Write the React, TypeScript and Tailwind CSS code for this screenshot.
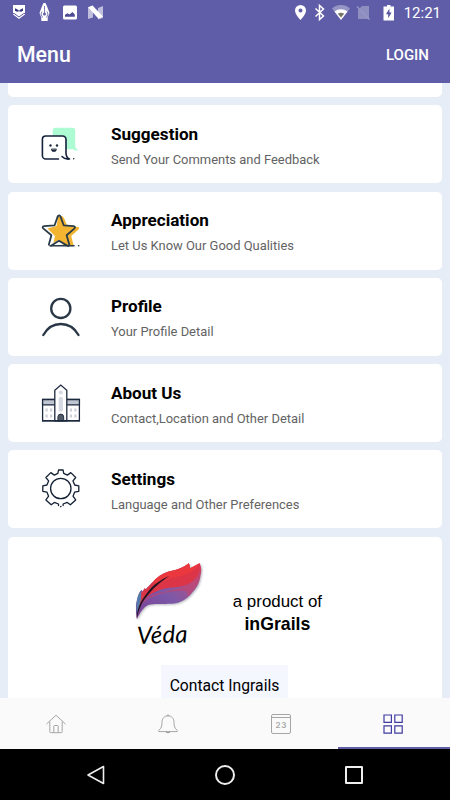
import type { ReactNode } from 'react';

type MenuItem = {
  title: string;
  detail: string;
  icon: ReactNode;
};

const INK = '#1e293b';

function SuggestionIcon() {
  return (
    <svg viewBox="0 0 40 40" className="size-10" fill="none" strokeLinecap="round" strokeLinejoin="round">
      <path d="M14 3.700h17.500a2.700 2.700 0 0 1 2.700 2.700V21c0 3 1.400 4.600 3.700 5.400-2 .4-4.300.1-6-1.200H11.700V6.200a2.500 2.500 0 0 1 2.300-2.500z" fill="#acfbd3" />
      <rect x="1.400" y="12" width="23.600" height="23" rx="3.300" fill="#fff" />
      <path d="M17.500 35H4.700a3.300 3.300 0 0 1-3.300-3.300V15.300A3.300 3.300 0 0 1 4.700 12h17a3.300 3.300 0 0 1 3.300 3.300V29c0 3.200 1.200 5 3.500 6-3 .4-5.800-.6-7.500-2.500" stroke="#16213b" strokeWidth="1.600" />
      <circle cx="9.500" cy="21.500" r="1.200" fill={INK} />
      <circle cx="16" cy="21.500" r="1.200" fill={INK} />
      <path d="M10.400 25.400a2.500 2.200 0 0 0 5 0z" fill={INK} stroke={INK} strokeWidth=".8" />
      <circle cx="32.700" cy="34.800" r=".8" fill={INK} />
    </svg>
  );
}

function StarIcon() {
  return (
    <svg viewBox="0 0 40 40" className="size-10" fill="none" strokeLinecap="round" strokeLinejoin="round">
      <path d="M17 7c1-2.500 4.500-3 6 0l3.300 8.100 10.400.8c1.700.2 2 1.600.8 2.700l-7.300 6.400 2.500 9.800H15l-3-1 2-8.800-7.500-7.500 9-2.500z" fill="#f3b431" />
      <path d="M9 34l8.500-5 6.500 4-6 1.500z" fill="#fff" />
      <path d="M16.700 5.600c.6-1.700 2.200-1.700 2.800 0l3.200 8.700 9.800.8c1.600.1 2 1.500.8 2.500l-7.700 6.700 2.600 9c.4 1.500-.8 2.200-2 1.300L18 29.800l-8 4.900" stroke="#2a3b48" strokeWidth="1.800" />
      <path d="M16.700 5.600l-3.100 8.700-10.600.8c-1.400.1-1.800 1.400-.8 2.300l8.200 6.900-2.600 9.400" stroke="#2a3b48" strokeWidth="1.800" />
      <path d="M9 34.800h24" stroke="#2a3b48" strokeWidth="1.600" />
      <circle cx="37.700" cy="34.800" r=".8" fill={INK} />
    </svg>
  );
}

function ProfileIcon() {
  return (
    <svg viewBox="0 0 40 40" className="size-10" fill="none" stroke="#293746" strokeWidth="2.300" strokeLinecap="round">
      <circle cx="19.800" cy="11.400" r="9.600" />
      <path d="M2.300 38C6.300 31 12.600 27 19.800 27s13.700 4 17.700 11" />
    </svg>
  );
}

function BuildingIcon() {
  return (
    <svg viewBox="0 0 40 40" className="size-10" fill="none" stroke="#1d293e" strokeWidth="1.300">
      <rect x="1.600" y="16.500" width="36.800" height="21.300" fill="#fff" />
      <path d="M1.600 16.500h36.800v5.300H1.600z" fill="#bfc6d1" />
      <path d="M13.800 37.800V7.200L19.800 2l6 5.200v30.600z" fill="#fff" />
      <circle cx="19.800" cy="9.500" r="2" fill="#d5d9e1" stroke="none" />
      <rect x="17.700" y="14" width="4.200" height="14.500" rx="1.500" fill="#d5d9e1" stroke="none" />
      <path d="M16.900 37.800V34a2.900 2.900 0 0 1 5.800 0v3.800z" fill="#535b66" strokeWidth=".9" />
      <path d="M5.600 25.500v3m4.500-3v3m19.800-3v3m4.500-3v3M5.600 31.500v3m4.500-3v3m19.800-3v3m4.500-3v3" stroke="#ccd1da" strokeWidth="2.200" />
      <path d="M1 37.800h38" strokeWidth="1.500" />
    </svg>
  );
}

function GearIcon() {
  return (
    <svg viewBox="0 0 40 40" className="size-10" fill="none" stroke="#142033" strokeWidth="1.300" strokeLinecap="round" strokeLinejoin="round">
      <circle cx="19.800" cy="19.500" r="10.200" />
      <path d="M17.500 36.500v-1.500l-4.100-1.600-3.200 2.400-5.300-4.900 2.700-3.700-1.700-4.100-4.100-.8v-5.500l4.100-.8 1.700-4.100-2.700-3.400 4.900-4.900 3.500 2.500 3.600-1.700.6-3.400h4.600l.6 3.400 3.600 1.700 3.500-2.500 4.900 4.900-2.700 3.400 1.700 4.100 4.100.8v5.500l-4.100.8-1.700 4.100 2.700 3.700-5.300 4.900-3.200-2.400-4.100 1.600v1.500" />
      <circle cx="19.800" cy="37.600" r=".8" fill="#142033" stroke="none" />
    </svg>
  );
}

const items: MenuItem[] = [
  { title: 'Suggestion', detail: 'Send Your Comments and Feedback', icon: <SuggestionIcon /> },
  { title: 'Appreciation', detail: 'Let Us Know Our Good Qualities', icon: <StarIcon /> },
  { title: 'Profile', detail: 'Your Profile Detail', icon: <ProfileIcon /> },
  { title: 'About Us', detail: 'Contact,Location and Other Detail', icon: <BuildingIcon /> },
  { title: 'Settings', detail: 'Language and Other Preferences', icon: <GearIcon /> },
];

function StatusBar() {
  return (
    <div className="flex h-[27px] items-center justify-between pb-px pl-[13px] pr-[9px] text-white">
      <svg viewBox="0 0 92 20" className="h-5 w-[92px]" fill="currentColor">
        <path d="M0 2h12v9.500L6 16l-6-4.500z" />
        <path d="M2 5.200l3 1.600L6 8l1-1.200 3-1.600v2.600L8 8.700l-2-.4-2 .4-2-.9z" fill="#33337e" />
        <path d="M0 10.500h1.200L6 14l4.800-3.500H12" fill="none" stroke="#5f5da7" strokeWidth="1" />
        <path d="M30.500 0h2l1.500 3.300L36.500 10l-1.800 4.500v3.500h-6.400v-3.500L26.500 10 29 3.300z" />
        <path d="M31.500 3v7M29 8.500l-1 2.500 1.500 3.500M34 8.500l1 2.500-1.500 3.500" fill="none" stroke="#5f5da7" strokeWidth=".8" />
        <circle cx="31.500" cy="11" r="1.500" fill="#5f5da7" />
        <rect x="50" y="2.500" width="14" height="14" rx="1.500" />
        <path d="M52 13.700v-2l2.500-1.500 2 1.300 3-2.500 2.300 2.500v2.200z" fill="#4b4a94" />
        <path d="M75 4.500l5-2v12l-5 1.500zM85 5l5-2v12l-5 1.500z" opacity=".6" />
        <path d="M75 4.200l4.500-1.700L90 13.500l-4.500 2.200z" />
      </svg>
      <div className="flex items-center gap-[10px]">
        <svg viewBox="0 0 100 20" className="h-5 w-[100px]" fill="currentColor">
          <path fillRule="evenodd" d="M6.500 2A5.500 5.500 0 0 0 1 7.500C1 11.500 6.500 17 6.500 17S12 11.500 12 7.500A5.500 5.500 0 0 0 6.500 2zm0 3.600a2 2 0 1 1 0 4 2 2 0 0 1 0-4z" />
          <path d="M21.500 5.500l8 7.500-4 3.500v-14l4 3.500-8 7.500" fill="none" stroke="currentColor" strokeWidth="1.500" />
          <path d="M38 5.500a13.500 13.500 0 0 1 18 0L47 17z" opacity=".35" />
          <path d="M40.500 8.600a10 10 0 0 1 13 0L47 17z" />
          <path d="M43.800 10.700a6 6 0 0 1 6.400 0L47 14.500z" fill="#77746a" />
          <path d="M68 3h7v13H64V7z" opacity=".3" />
          <path d="M63 3.500l12.500 13" stroke="#9896c8" strokeWidth="1.400" />
          <path d="M93 2h3.500v1.500H100v14H89.500v-14H93z" />
          <path d="M95.400 5.500L92 11.200h2.200v4l3.400-5.700h-2.200z" fill="#5552a0" />
        </svg>
        <span className="text-[15px] leading-5">12:21</span>
      </div>
    </div>
  );
}

function VedaLogo() {
  return (
    <div className="flex w-[66px] flex-col">
      <svg viewBox="0 0 66 58" className="h-[58px] w-[66px] drop-shadow-[1px_1px_1px_#b8b8c0]">
        <defs>
          <linearGradient id="vane" x1="0" y1="1" x2="1" y2="0">
            <stop offset="0" stopColor="#7a3f92" />
            <stop offset=".45" stopColor="#7c58a8" />
            <stop offset=".75" stopColor="#a5538d" />
            <stop offset="1" stopColor="#df3854" />
          </linearGradient>
        </defs>
        <path d="M1 57C-.5 50-.5 45 .3 41.300 1 36 3 31 5.300 28l1.500 1.500 1.800-3.200 1.200 1L17 19.700C21 15 26 12 32 9.700c5-1.400 12-1.500 20.900-8.400l1.300 5 9.400-5c2 4 2 8 1 11.700-1 7-3 12-7.600 16.700-4 5-8 8.500-15 11-6 1.600-9 .8-13.400 1.300-6 0-11-.5-16.600 1C8 45 4 50 1 57z" fill="url(#vane)" />
        <path d="M5 43C12 32 22 31 32 29c14-2 24-7 31-17-1 10-5 17-12 23 2-6-2-7-9-6-14 1-27 4-37 14z" fill="#c4446f" opacity=".65" />
        <path d="M2.500 45l1.500-14 2.800-1.500 1.800-3.200 1.200 1L17 19.700C21 15 26 12 32 9.700c5-1.400 12-1.500 20.900-8.400l1.300 5 9.400-5c1.400 6-1 12-5 16-5 6-13 8-26 8.500C19 28 10 34 2.500 45z" fill="#dc3547" />
        <path d="M17 19.700C21 15 26 12 32 9.700c5-1.400 12-1.500 20.900-8.400l1.300 5 9.400-5C58 11 48 14 34 16l-14 6z" fill="#ef3a3c" opacity=".8" />
        <path d="M1 53C-.5 42 1 33 5.300 28L5 37z" fill="#557bac" />
        <path d="M.8 57c-.3-9 3.200-17 10.200-26 6-8.500 14-13.500 22.600-17.300C26 19 19 24 12.800 32 5.500 40 2.500 48 .8 57z" fill="#211321" />
      </svg>
      <span className="ml-px mt-[3px] block origin-left -rotate-2 font-['Lato',sans-serif] text-[24px] italic leading-6 tracking-[.2px] text-black">Véda</span>
    </div>
  );
}

function BottomTabs() {
  return (
    <nav className="grid h-[51px] shrink-0 grid-cols-4 bg-[#fafafa] text-[#a6a6a6]">
      <div className="flex items-center justify-center">
        <svg viewBox="0 0 20 20" className="size-5" fill="none" stroke="currentColor" strokeLinecap="round" strokeLinejoin="round">
          <path d="M.8 9.800L10 1.200l9.200 8.600M3.800 8v9.500c0 .8.500 1.200 1.200 1.200h10c.7 0 1.200-.4 1.200-1.200V8M7.800 18.500v-6.200c0-.6.300-.8.800-.8h2.800c.5 0 .8.200.8.800v6.200" />
        </svg>
      </div>
      <div className="flex items-center justify-center pr-px">
        <svg viewBox="0 0 20 20" className="size-5" fill="none" stroke="currentColor" strokeLinejoin="round">
          <path d="M8.500 1.800a1.600 1.200 0 0 1 3 0M10 2c-4 0-6 2.700-6 6.200 0 4-.8 6.100-3.200 8.200v1.200h18.400v-1.200C16.800 14.300 16 12.200 16 8.200 16 4.700 14 2 10 2z" />
          <path d="M7.800 17.800a2.300 1.300 0 0 0 4.400 0z" fill="currentColor" />
        </svg>
      </div>
      <div className="flex items-center justify-center">
        <div className="h-5 w-5 rounded-[2px] border-[1.500px] border-current">
          <div className="h-[3px] border-b border-current" />
          <div className="text-center font-['Inter',sans-serif] text-[8px] font-semibold leading-[15px] tracking-[.7px]">23</div>
        </div>
      </div>
      <div className="flex items-center justify-center border-b-2 border-[#5f5da7] pr-px pt-0.5">
        <svg viewBox="0 0 20 20" className="size-5" fill="none" stroke="#3f3ba0" strokeWidth="1.200">
          <path d="M1 1h7.400v7.400H1zM11.800 1h7.400v7.400h-7.400zM1 11.800h7.400v7.400H1zM11.800 11.800h7.400v7.400h-7.400z" />
        </svg>
      </div>
    </nav>
  );
}

export default function App() {
  return (
    <div className="flex h-[800px] w-[450px] flex-col overflow-hidden bg-[#e6edf7] font-['Roboto',sans-serif]">
      <header className="h-[83px] shrink-0 bg-[#5f5da7] text-white">
        <StatusBar />
        <div className="flex h-14 items-center justify-between pl-[17px] pr-[21px]">
          <h1 className="text-[21.300px] font-medium">Menu</h1>
          <button type="button" className="text-[15px] font-medium">LOGIN</button>
        </div>
      </header>

      <main className="flex min-h-0 flex-1 flex-col gap-[8.300px] overflow-hidden px-[8.400px]">
        <div className="h-3.5 shrink-0 rounded-b-[5px] bg-white" />
        {items.map((item) => (
          <section key={item.title} className="flex h-[78px] shrink-0 items-center rounded-[5px] bg-white pl-[32.600px]">
            {item.icon}
            <div className="ml-[30px] pt-1">
              <h2 className="text-[17.100px] font-bold leading-6 text-black">{item.title}</h2>
              <p className="mt-[3px] text-[12.950px] leading-[22px] text-[#636363]">{item.detail}</p>
            </div>
          </section>
        ))}

        <section className="flex shrink-0 flex-col items-center rounded-t-[5px] bg-white pt-[25px]">
          <div className="flex w-full pl-[128px]">
            <VedaLogo />
            <div className="ml-[22px] mt-[29px] w-[106px] text-center font-['Liberation_Sans',sans-serif] text-[16.900px] leading-[22px] text-black">
              <p>a product of</p>
              <p className="text-[17.700px] font-bold">inGrails</p>
            </div>
          </div>
          <button type="button" className="mr-px mt-[18px] h-10 w-[127px] bg-[#f4f7fe] pt-0.5 text-[15.700px] text-black">Contact Ingrails</button>
        </section>
      </main>

      <BottomTabs />
      <div className="flex h-[51px] shrink-0 items-center justify-between bg-black pl-[85px] pr-[86px]">
        <svg viewBox="0 0 20 20" className="size-5" fill="none" stroke="#eee" strokeWidth="1.600" strokeLinejoin="round">
          <path d="M18.500 1.500v17L3 10z" />
        </svg>
        <div className="size-5 rounded-full border-2 border-[#eee]" />
        <div className="mr-px size-[18px] rounded-[1px] border-2 border-[#eee]" />
      </div>
    </div>
  );
}
